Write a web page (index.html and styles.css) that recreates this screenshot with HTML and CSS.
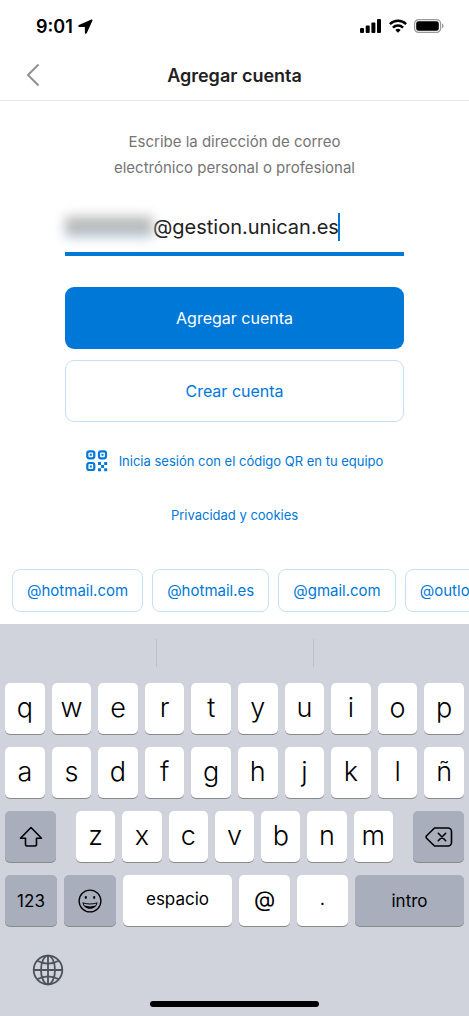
FILE: index.html
```html
<!DOCTYPE html>
<html lang="es">
<head>
<meta charset="utf-8">
<meta name="viewport" content="width=device-width, initial-scale=1">
<title>Agregar cuenta</title>
<link rel="stylesheet" href="styles.css">
</head>
<body>
<div class="screen">
  <div class="status">
    <div class="status-time">
      <span>9:01</span>
      <svg width="15" height="15" viewBox="0 0 15 15" aria-hidden="true"><path d="M13.400.500.900 6.100c-1.100.5-.9 1.900.3 1.900l5.600.1.100 5.600c0 1.200 1.400 1.400 1.900.3L14.500 1.600c.3-.7-.4-1.400-1.100-1.100z"/></svg>
    </div>
    <div class="status-icons">
      <svg width="22" height="14" viewBox="0 0 22 14" aria-hidden="true"><rect x="0" y="9" width="4" height="5" rx="1"/><rect x="5.700" y="6.500" width="4" height="7.500" rx="1"/><rect x="11.400" y="3.500" width="4" height="10.500" rx="1"/><rect x="17" y="0" width="4" height="14" rx="1"/></svg>
      <svg width="18" height="14" viewBox="0 0 18 14" aria-hidden="true"><g fill="none" stroke="#000" stroke-width="2.500"><path d="M.9 5.200a11.500 11.500 0 0 1 16.200 0"/><path d="M3.900 8.600a7.200 7.200 0 0 1 10.200 0"/></g><path d="M9 13.700 6.300 11a3.900 3.900 0 0 1 5.400 0z"/></svg>
      <svg width="30" height="14" viewBox="0 0 30 14" aria-hidden="true"><rect x=".6" y=".6" width="26" height="12.800" rx="4" fill="none" stroke="#999" stroke-width="1.200"/><rect x="2.200" y="2.200" width="22.600" height="9.600" rx="2.300"/><path d="M28 4.600c2 .8 2 4 0 4.800z" fill="#999"/></svg>
    </div>
  </div>
  <header class="nav">
    <button class="back" type="button" aria-label="Atrás"><svg width="14" height="24" viewBox="0 0 14 24" aria-hidden="true"><path d="M12.500 1.500 2 12l10.500 10.500" fill="none" stroke="#919191" stroke-width="2"/></svg></button>
    <h1 class="nav-title">Agregar cuenta</h1>
  </header>

  <main class="content">
    <form class="form">
      <label class="hint" for="email">Escribe la dirección de correo electrónico personal o profesional</label>
      <div class="field">
        <span class="redacted"></span>
        <input class="email" id="email" type="text" value="@gestion.unican.es">
        <span class="caret"></span>
      </div>
      <button class="btn btn-primary" type="button">Agregar cuenta</button>
      <button class="btn btn-outline" type="button">Crear cuenta</button>
    </form>
    <a class="link qr-link" href="#">
      <svg width="22" height="22" viewBox="0 0 22 22" aria-hidden="true"><g fill="none" stroke="#0078d7" stroke-width="2.200"><rect x="1.300" y="1.300" width="7" height="7" rx="2"/><rect x="13" y="1.300" width="7" height="7" rx="2"/><rect x="1.300" y="13" width="7" height="7" rx="2"/></g><g fill="#0078d7"><path d="M3.800 3.800h2v2h-2zM15.500 3.800h2v2h-2zM3.800 15.500h2v2h-2zM12 12h3v3h-3zM18.200 12h3v3h-3zM15.100 15.100h3v3h-3zM12 18.200h3v3h-3zM18.200 18.200h3v3h-3z"/></g></svg>
      <span>Inicia sesión con el código QR en tu equipo</span>
    </a>
    <a class="link" href="#">Privacidad y cookies</a>
  </main>

  <div class="domains">
    <button class="domain" type="button">@hotmail.com</button>
    <button class="domain" type="button">@hotmail.es</button>
    <button class="domain" type="button">@gmail.com</button>
    <button class="domain" type="button">@outlook.com</button>
  </div>

  <div class="keyboard">
    <div class="suggestions"><span class="slot"></span><span class="slot"></span><span class="slot"></span></div>
    <div class="keys">
      <div class="row">
        <button class="key" type="button">q</button><button class="key" type="button">w</button><button class="key" type="button">e</button><button class="key" type="button">r</button><button class="key" type="button">t</button><button class="key" type="button">y</button><button class="key" type="button">u</button><button class="key" type="button">i</button><button class="key" type="button">o</button><button class="key" type="button">p</button>
      </div>
      <div class="row">
        <button class="key" type="button">a</button><button class="key" type="button">s</button><button class="key" type="button">d</button><button class="key" type="button">f</button><button class="key" type="button">g</button><button class="key" type="button">h</button><button class="key" type="button">j</button><button class="key" type="button">k</button><button class="key" type="button">l</button><button class="key" type="button">ñ</button>
      </div>
      <div class="row-shift">
        <button class="key key-dark" type="button" aria-label="Mayúsculas"><svg width="24" height="22" viewBox="0 0 24 22" aria-hidden="true"><path d="M12 1.500 1.500 12.300h5v6.200c0 1 .5 1.500 1.500 1.500h8c1 0 1.500-.5 1.500-1.500v-6.200h5z" fill="none" stroke="#000" stroke-width="1.600" stroke-linejoin="round"/></svg></button>
        <div class="row">
          <button class="key" type="button">z</button><button class="key" type="button">x</button><button class="key" type="button">c</button><button class="key" type="button">v</button><button class="key" type="button">b</button><button class="key" type="button">n</button><button class="key" type="button">m</button>
        </div>
        <button class="key key-dark" type="button" aria-label="Borrar"><svg width="28" height="20" viewBox="0 0 28 20" aria-hidden="true"><g fill="none" stroke="#000" stroke-width="1.600" stroke-linejoin="round" stroke-linecap="round"><path d="M9.500 1h13.500a3.500 3.500 0 0 1 3.500 3.500v11a3.500 3.500 0 0 1-3.500 3.500H9.500L1.600 11.200q-1-1.200 0-2.400z"/><path d="m13.300 6.300 7.400 7.400M20.700 6.300l-7.400 7.400"/></g></svg></button>
      </div>
      <div class="row-space">
        <button class="key key-dark key-text" type="button">123</button>
        <button class="key key-dark" type="button" aria-label="Emoji"><svg width="24" height="24" viewBox="0 0 24 24" aria-hidden="true"><circle cx="12" cy="12" r="10.900" fill="none" stroke="#000" stroke-width="1.300"/><ellipse cx="7.800" cy="8.500" rx="1.100" ry="1.400"/><ellipse cx="16.200" cy="8.500" rx="1.100" ry="1.400"/><path d="M4.500 13.200q7.500 2.400 15 0c-.5 4.200-3.500 6.500-7.500 6.500s-7-2.300-7.500-6.500z"/><path d="M5.700 14.500q6.300 1.800 12.600 0l-.8 2.100q-5.500 1.600-11 0z" fill="#a8aebb"/></svg></button>
        <button class="key key-text" type="button">espacio</button>
        <button class="key key-symbol" type="button">@</button>
        <button class="key key-text" type="button">.</button>
        <button class="key key-dark key-text" type="button">intro</button>
      </div>
    </div>
    <div class="dock">
      <button class="globe" type="button" aria-label="Cambiar teclado"><svg width="32" height="32" viewBox="0 0 32 32" aria-hidden="true"><g fill="none" stroke="#4d525c" stroke-width="1.800"><circle cx="16" cy="16" r="14.300"/><ellipse cx="16" cy="16" rx="7" ry="14.300"/><path d="M16 1.700v28.600M1.700 16h28.600M5.200 6.700q10.800 5.800 21.600 0M5.200 25.300q10.800-5.800 21.600 0"/></g></svg></button>
    </div>
    <div class="home-bar"></div>
  </div>
</div>
</body>
</html>
```
FILE: styles.css
```css
* { box-sizing: border-box; }

body {
  margin: 0;
  background: #fff;
  color: #212121;
  font-family: Inter, "Liberation Sans", sans-serif;
  font-size: 16px;
}

button {
  margin: 0;
  padding: 0;
  border: 0;
  background: none;
  color: inherit;
  font: inherit;
}

svg { display: block; }

.screen {
  display: flex;
  flex-direction: column;
  min-height: 100vh;
  overflow: hidden;
}

.status {
  display: flex;
  justify-content: space-between;
  align-items: center;
  height: 50px;
  padding: 2px 25px 0 36px;
  color: #000;
}

.status-time {
  display: flex;
  align-items: center;
  gap: 5px;
  font-size: 18px;
  font-weight: 600;
}

.status-icons {
  display: flex;
  gap: 7px;
}

.nav {
  display: grid;
  grid-template-columns: 48px 1fr 48px;
  align-items: center;
  height: 51px;
  border-bottom: 1px solid #e8e8e8;
}

.back { padding-left: 26px; }

.nav-title {
  margin: 0;
  font-size: 18px;
  font-weight: 600;
  text-align: center;
}

.content {
  display: flex;
  flex-direction: column;
  align-items: center;
  padding: 28px 65px 0;
}

.form {
  display: flex;
  flex-direction: column;
  width: 100%;
}

.hint {
  padding: 0 45px;
  color: #757575;
  font-size: 15px;
  line-height: 26px;
  text-align: center;
}

.field {
  display: flex;
  align-items: center;
  height: 48px;
  margin: 27px 0 31px;
  padding-bottom: 6px;
  border-bottom: 4px solid #0078d7;
}

.redacted {
  width: 88px;
  height: 22px;
  background: linear-gradient(#c4c4c4, #b4b4b4 60%, #c4dcf0);
  filter: blur(6px);
}

.email {
  width: 185px;
  padding: 0;
  border: 0;
  outline: 0;
  background: none;
  color: #212121;
  font: inherit;
  font-size: 20px;
}

.caret {
  width: 2px;
  height: 28px;
  background: #0078d7;
}

.btn {
  height: 62px;
  border-radius: 9px;
  font-size: 16px;
}

.btn-primary {
  background: #0078d7;
  color: #fff;
}

.btn-outline {
  margin-top: 11px;
  border: 1px solid #c7e0f4;
  color: #0078d7;
}

.link {
  margin-top: 35px;
  color: #0078d7;
  font-size: 13px;
  line-height: 16px;
  text-decoration: none;
}

.qr-link {
  display: flex;
  align-items: center;
  gap: 11px;
  margin-top: 28px;
}

.domains {
  display: flex;
  gap: 9px;
  margin-top: auto;
  padding: 0 12px 12px;
  overflow: hidden;
}

.domain {
  flex: none;
  height: 43px;
  padding: 0 14px;
  border: 1px solid #c7e0f4;
  border-radius: 8px;
  color: #0078d7;
  font-size: 15px;
}

.keyboard {
  background: #d0d3db;
  color: #000;
}

.suggestions {
  display: grid;
  grid-template-columns: repeat(3, 1fr);
  padding: 15px 0 16px;
}

.slot { height: 28px; }
.slot + .slot { border-left: 1px solid #bfc1c6; }

.keys {
  display: grid;
  gap: 13px;
  padding: 0 5px;
}

.row {
  display: grid;
  grid-auto-flow: column;
  grid-auto-columns: minmax(0, 1fr);
  gap: 7px;
}

.row-shift {
  display: grid;
  grid-template-columns: 51px 1fr 51px;
  gap: 20px;
}

.row-space {
  display: grid;
  grid-template-columns: 52fr 52fr 109fr 51fr 51fr 109fr;
  gap: 7px;
}

.key {
  display: flex;
  justify-content: center;
  align-items: center;
  height: 51px;
  padding-bottom: 3px;
  border-radius: 5px;
  background: #fff;
  box-shadow: 0 1px 0 #898a8d;
  font-size: 27px;
  font-weight: 300;
}

.key-dark {
  padding-bottom: 0;
  background: #a8aebb;
}

.key-text {
  font-size: 17px;
  font-weight: 400;
}

.key-symbol {
  font-size: 22px;
  font-weight: 400;
}

.dock { padding: 28px 32px 11px; }

.home-bar {
  width: 36%;
  height: 6px;
  margin: 0 auto 9px;
  border-radius: 3px;
  background: #000;
}
```
